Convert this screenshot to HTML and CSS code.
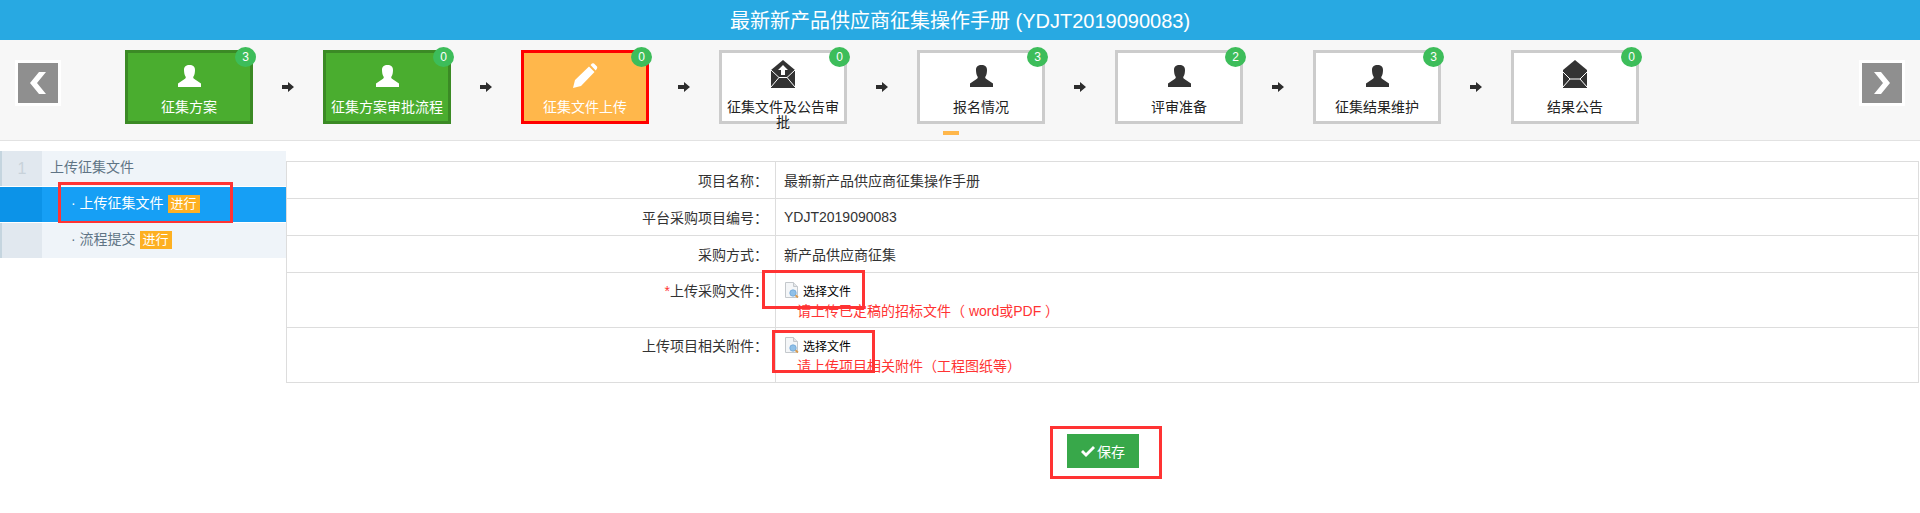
FILE: index.html
```html
<!DOCTYPE html>
<html lang="zh-CN">
<head>
    <meta charset="UTF-8">
    <title>最新新产品供应商征集操作手册</title>
    <link rel="stylesheet" href="styles.css">
</head>
<body>

    <svg class="defs" width="0" height="0">
        <symbol id="i-user" viewBox="0 0 23 22"><path d="M11.500 0C8 0 6 1.500 6 5c0 2.500.5 5 1.500 6.500.5.8.3 1.800-.5 2.300L0 18.500V22h23v-3.500l-7-4.700c-.8-.5-1-1.500-.5-2.300 1-1.500 1.500-4 1.500-6.500C17 1.500 15 0 11.500 0z"/></symbol>
        <symbol id="i-pencil" viewBox="0 0 25 25"><path d="M0 25l2-8L16 3.500 21.500 9 8 23zM17.500 2L19 .5q1-.5 2 0l3 3q.5 1 0 2l-1.300 2z"/></symbol>
        <symbol id="i-mail" viewBox="0 0 24 28">
            <path d="M12 0l12 10v18H0V10z"/>
            <path class="flap" d="M0 12l7 7h10l7-7M7 19l-7 8M17 19l7 8"/>
        </symbol>
        <symbol id="i-mail-up" viewBox="0 0 24 28">
            <path d="M12 0l12 10v18H0V10z"/>
            <path class="flap" d="M0 10l8 7.500h8l8-7.500M8 17.500l-8 9.500M16 17.500l8 9.500"/>
            <path class="up" d="M12 5l5 5h-3v5h-4v-5H7z"/>
        </symbol>
        <symbol id="i-check" viewBox="0 0 14 11"><path d="M0 6l2-2 3 3 7-7 2 2-9 9z"/></symbol>
        <symbol id="i-arrow" viewBox="0 0 12 10"><path d="M0 3h6V0l6 5-6 5V7H0z"/></symbol>
        <symbol id="i-file" viewBox="0 0 16 16">
            <path d="M1.500.5h8l4 4v11h-12z" fill="#f4f6f8" stroke="#c4c8cc"/>
            <path d="M9.500.5v4h4" fill="#e3e6e9" stroke="#c4c8cc"/>
            <circle cx="9" cy="11" r="3.200" fill="#8fc0e8" stroke="#6ea5d6" stroke-width=".8"/>
            <path d="M11.500 13.300l2.500 2.200" stroke="#d99a4e" stroke-width="1.800"/>
        </symbol>
    </svg>

    <div class="title-bar">最新新产品供应商征集操作手册 (YDJT2019090083)</div>

    <div class="steps-bar">
        <a class="nav-btn">
            <svg width="16" height="22" viewBox="0 0 16 22"><path d="M9 0h7L7 11l9 11H9L0 11z"/></svg>
        </a>
        <div class="steps">
            <div class="step done">
                <svg class="step-icon"><use href="#i-user"/></svg>
                <span class="step-name">征集方案</span>
                <i class="badge">3</i>
            </div>
            <svg class="arrow"><use href="#i-arrow"/></svg>
            <div class="step done">
                <svg class="step-icon"><use href="#i-user"/></svg>
                <span class="step-name">征集方案审批流程</span>
                <i class="badge">0</i>
            </div>
            <svg class="arrow"><use href="#i-arrow"/></svg>
            <div class="step current">
                <svg class="step-icon pencil"><use href="#i-pencil"/></svg>
                <span class="step-name">征集文件上传</span>
                <i class="badge">0</i>
            </div>
            <svg class="arrow"><use href="#i-arrow"/></svg>
            <div class="step">
                <svg class="step-icon mail"><use href="#i-mail-up"/></svg>
                <span class="step-name">征集文件及公告审批</span>
                <i class="badge">0</i>
            </div>
            <svg class="arrow"><use href="#i-arrow"/></svg>
            <div class="step">
                <svg class="step-icon"><use href="#i-user"/></svg>
                <span class="step-name">报名情况</span>
                <i class="badge">3</i>
                <b class="step-mark"></b>
            </div>
            <svg class="arrow"><use href="#i-arrow"/></svg>
            <div class="step">
                <svg class="step-icon"><use href="#i-user"/></svg>
                <span class="step-name">评审准备</span>
                <i class="badge">2</i>
            </div>
            <svg class="arrow"><use href="#i-arrow"/></svg>
            <div class="step">
                <svg class="step-icon"><use href="#i-user"/></svg>
                <span class="step-name">征集结果维护</span>
                <i class="badge">3</i>
            </div>
            <svg class="arrow"><use href="#i-arrow"/></svg>
            <div class="step">
                <svg class="step-icon mail"><use href="#i-mail"/></svg>
                <span class="step-name">结果公告</span>
                <i class="badge">0</i>
            </div>
        </div>
        <a class="nav-btn">
            <svg width="16" height="22" viewBox="0 0 16 22"><path d="M0 0h7l9 11-9 11H0l9-11z"/></svg>
        </a>
    </div>

    <div class="main">
        <div class="side">
            <div class="side-row">
                <span class="side-num">1</span>
                <span class="side-text">上传征集文件</span>
            </div>
            <div class="side-row active">
                <span class="side-num"></span>
                <span class="side-text sub">· 上传征集文件<em class="tag">进行</em></span>
                <b class="mark mark-side"></b>
            </div>
            <div class="side-row">
                <span class="side-num"></span>
                <span class="side-text sub">· 流程提交<em class="tag">进行</em></span>
            </div>
        </div>

        <div class="content">
            <table class="form-table">
                <tr>
                    <th>项目名称：</th>
                    <td>最新新产品供应商征集操作手册</td>
                </tr>
                <tr>
                    <th>平台采购项目编号：</th>
                    <td>YDJT2019090083</td>
                </tr>
                <tr>
                    <th>采购方式：</th>
                    <td>新产品供应商征集</td>
                </tr>
                <tr class="upload-row">
                    <th><span class="star">*</span>上传采购文件：</th>
                    <td>
                        <div class="file-btn"><svg width="16" height="16"><use href="#i-file"/></svg>选择文件</div>
                        <div class="hint">请上传已定稿的招标文件（ word或PDF ）</div>
                        <b class="mark mark-file-a"></b>
                    </td>
                </tr>
                <tr class="upload-row">
                    <th>上传项目相关附件：</th>
                    <td>
                        <div class="file-btn"><svg width="16" height="16"><use href="#i-file"/></svg>选择文件</div>
                        <div class="hint">请上传项目相关附件（工程图纸等）</div>
                        <b class="mark mark-file-b"></b>
                    </td>
                </tr>
            </table>

            <div class="save-mark">
                <button class="save-btn"><svg width="14" height="11"><use href="#i-check"/></svg>保存</button>
            </div>
        </div>
    </div>

</body>
</html>
```

FILE: styles.css
```css
/* Global Styles */
body {
    margin: 0;
    font-family: "Liberation Sans", "Noto Sans CJK SC", sans-serif;
    font-size: 14px;
    color: #333;
    background: #fff;
    text-spacing-trim: space-all;
}

.defs {
    position: absolute;
}

.title-bar {
    height: 40px;
    line-height: 42px;
    text-align: center;
    font-size: 20px;
    color: #fff;
    background: #28a9e2;
}

/* Steps */
.steps-bar {
    display: flex;
    height: 100px;
    background: #f7f7f7;
    border-bottom: 1px solid #e2e2e2;
}

.nav-btn {
    flex: none;
    display: flex;
    align-items: center;
    justify-content: center;
    width: 40px;
    height: 40px;
    margin: 20px 15px 0;
    border: 3px solid #fff;
    background: #8f8f8f;
    fill: #fff;
}

.steps {
    flex: 1;
    display: flex;
    align-items: flex-start;
    padding: 10px 0 0 49px;
}

.step {
    position: relative;
    flex: none;
    box-sizing: border-box;
    width: 128px;
    height: 74px;
    padding-top: 12px;
    border: 3px solid #ccc;
    background: #fff;
    color: #222;
    fill: #333;
    text-align: center;
    line-height: 15px;
}

.step.done {
    border-color: #3b8a25;
    background: #4aad2f;
    color: #fff;
    fill: #fff;
}

.step.current {
    border-color: #f00;
    background: #ffb74b;
    color: #fff;
    fill: #fff;
}

.step-icon {
    display: block;
    width: 23px;
    height: 22px;
    margin: 0 auto 13px;
}

.step-icon.pencil {
    width: 25px;
    height: 25px;
    margin-top: -2px;
    margin-bottom: 12px;
}

.step-icon.mail {
    width: 24px;
    height: 28px;
    margin-top: -5px;
    margin-bottom: 12px;
}

.flap {
    fill: none;
    stroke: #fff;
    stroke-width: 1;
}

.up {
    fill: #fff;
}

.step-name {
    display: block;
}

.badge {
    position: absolute;
    top: -6px;
    right: -6px;
    width: 21px;
    height: 20px;
    line-height: 20px;
    border-radius: 50%;
    background: #3dbd5a;
    color: #fff;
    font-size: 12px;
    font-style: normal;
}

.step-mark {
    position: absolute;
    left: 23px;
    top: 78px;
    width: 16px;
    height: 4px;
    background: #ffb74b;
}

.arrow {
    flex: none;
    width: 12px;
    height: 10px;
    margin: 32px 29px 0;
    fill: #2d2d2d;
}

/* Main area */
.main {
    display: flex;
    align-items: flex-start;
}

.side {
    flex: none;
    width: 286px;
    margin-top: 10px;
}

.side-row {
    position: relative;
    display: flex;
    height: 35px;
    margin-bottom: 1px;
    line-height: 33px;
    background: #eff4f9;
    color: #5f7485;
}

.side-num {
    flex: none;
    box-sizing: border-box;
    width: 42px;
    border-left: 2px solid #c5d5df;
    background: #e1e8ef;
    text-align: center;
    font-size: 16px;
    line-height: 36px;
    color: #c8d2da;
}

.side-text {
    padding-left: 8px;
}

.side-text.sub {
    padding-left: 29px;
}

.side-row.active {
    background: #169ff5;
    color: #fff;
}

.side-row.active .side-num {
    background: #0c93e8;
    border-left-color: #0c93e8;
}

.tag {
    display: inline-block;
    height: 18px;
    line-height: 18px;
    margin-left: 4px;
    padding: 0 3px;
    background: #fdb022;
    color: #fff;
    font-size: 13px;
    font-style: normal;
}

.content {
    flex: 1;
    margin: 20px 1px 0 0;
}

.form-table {
    width: 100%;
    table-layout: fixed;
    border-collapse: collapse;
}

.form-table th,
.form-table td {
    box-sizing: border-box;
    height: 37px;
    padding: 0 0 1px;
    border: 1px solid #ddd;
    font-weight: normal;
}

.form-table th {
    width: 489px;
    padding-right: 7px;
    text-align: right;
    color: #333;
}

.form-table td {
    position: relative;
    padding-left: 8px;
}

.upload-row th,
.upload-row td {
    height: 55px;
    vertical-align: top;
}

.upload-row th {
    padding-top: 9px;
    line-height: 18px;
}

.star,
.hint {
    color: #f33;
}

.file-btn {
    display: flex;
    align-items: center;
    gap: 3px;
    height: 16px;
    margin-top: 9px;
    font-size: 12px;
    color: #000;
}

.hint {
    margin: 3px 0 0 13px;
    line-height: 20px;
}

/* Red annotation boxes */
.mark {
    position: absolute;
    box-sizing: border-box;
    border: 3px solid #f33;
    pointer-events: none;
}

.mark-side {
    left: 58px;
    top: -5px;
    width: 175px;
    height: 42px;
}

.mark-file-a {
    left: -14px;
    top: -3px;
    width: 103px;
    height: 39px;
}

.mark-file-b {
    left: -4px;
    top: 2px;
    width: 103px;
    height: 43px;
}

.save-mark {
    box-sizing: border-box;
    width: 112px;
    height: 53px;
    margin: 43px 0 0 764px;
    padding: 5px 0 0 14px;
    border: 3px solid #f33;
}

.save-btn {
    display: flex;
    align-items: center;
    justify-content: center;
    gap: 2px;
    width: 72px;
    height: 34px;
    padding: 0;
    border: none;
    background: #38a84a;
    color: #fff;
    fill: #fff;
    font-family: inherit;
    font-size: 14px;
}
```
